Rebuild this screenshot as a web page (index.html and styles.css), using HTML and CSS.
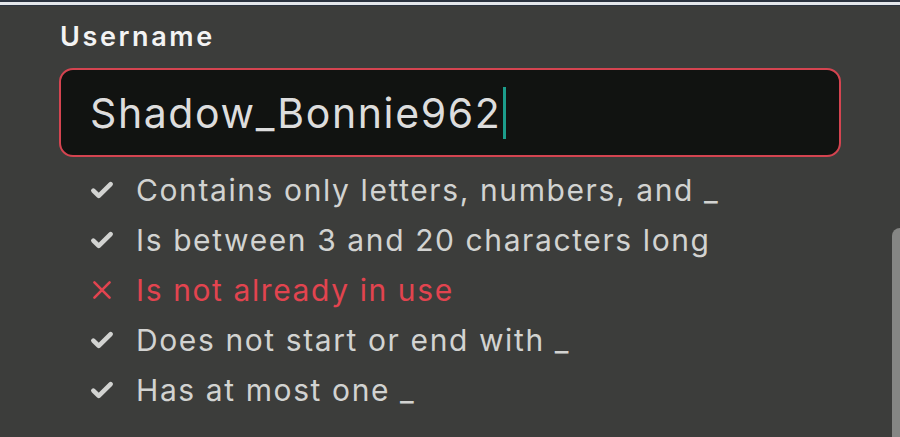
FILE: index.html
```html
<!DOCTYPE html>
<html lang="en">
<head>
    <meta charset="UTF-8">
    <meta name="viewport" content="width=device-width, initial-scale=1.0">
    <title>Username</title>
    <link rel="stylesheet" href="styles.css">
</head>
<body>
    <div class="topbar"></div>
    <div class="form">
        <div class="label">Username</div>
        <div class="input">
            <span class="value">Shadow_Bonnie962</span><span class="caret"></span>
        </div>
        <ul class="rules">
            <li class="ok">
                <svg class="icon" viewBox="0 0 24 24"><path d="M4 12.5l5 5L20 6.5"/></svg>
                Contains only letters, numbers, and _
            </li>
            <li class="ok">
                <svg class="icon" viewBox="0 0 24 24"><path d="M4 12.5l5 5L20 6.5"/></svg>
                Is between 3 and 20 characters long
            </li>
            <li class="bad">
                <svg class="icon" viewBox="0 0 24 24"><path d="M5 5l14 14M19 5L5 19"/></svg>
                Is not already in use
            </li>
            <li class="ok">
                <svg class="icon" viewBox="0 0 24 24"><path d="M4 12.5l5 5L20 6.5"/></svg>
                Does not start or end with _
            </li>
            <li class="ok">
                <svg class="icon" viewBox="0 0 24 24"><path d="M4 12.5l5 5L20 6.5"/></svg>
                Has at most one _
            </li>
        </ul>
    </div>
    <div class="scrollbar"></div>
</body>
</html>
```

FILE: styles.css
```css
body {
    margin: 0;
    padding: 0;
    height: 100vh;
    overflow: hidden;
    position: relative;
    background-color: #3c3d3b;
    font-family: 'Inter', sans-serif;
    color: #d2d3d1;
}
.topbar {
    height: 3px;
    background-color: #e4e7eb;
    border-top: 2px solid #2c3440;
    border-bottom: 1px solid #2c3440;
}
.form {
    width: 782px;
    padding: 13px 0 0 59px;
}
.label {
    font-size: 27px;
    font-weight: 600;
    line-height: 36px;
    letter-spacing: 2.6px;
    color: #f3f3f3;
    padding-left: 1px;
}
.input {
    margin-top: 13px;
    box-sizing: border-box;
    height: 89px;
    border: 2px solid #d44450;
    border-radius: 14px;
    background-color: #111311;
    padding-left: 29px;
    display: flex;
    align-items: center;
}
.value {
    font-size: 41px;
    letter-spacing: 1.6px;
    color: #dddddd;
}
.caret {
    width: 3px;
    height: 52px;
    margin-left: 2px;
    background-color: #1c9d8b;
}
.rules {
    list-style: none;
    margin: 8px 0 0;
    padding: 0 0 0 30px;
}
.rules li {
    display: flex;
    align-items: center;
    height: 50px;
    font-size: 30px;
    letter-spacing: 1.6px;
}
.icon {
    width: 26px;
    height: 26px;
    margin-right: 21px;
    fill: none;
    stroke: currentColor;
    stroke-width: 4.2;
    stroke-linecap: round;
    stroke-linejoin: round;
}
.ok {
    color: #d2d3d1;
}
.bad {
    color: #e2444f;
}
.bad .icon {
    stroke-width: 2.4;
}
.scrollbar {
    position: absolute;
    right: 0;
    top: 228px;
    bottom: 0;
    width: 8px;
    background-color: #858684;
    border-top-left-radius: 8px;
}
```
